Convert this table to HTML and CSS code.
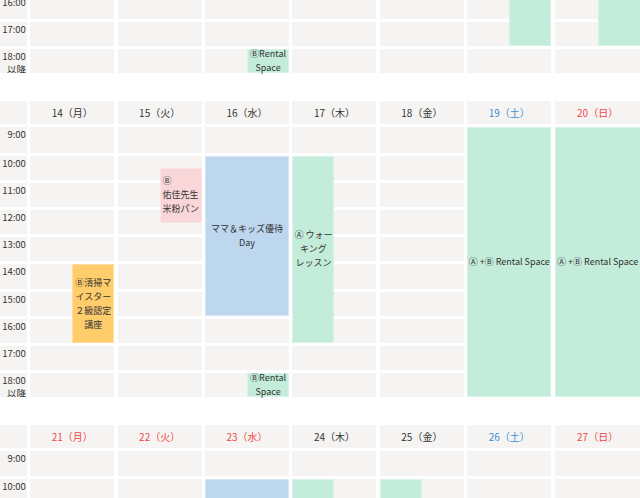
FILE: index.html
```html
<!DOCTYPE html>
<html lang="ja">
<head>
<meta charset="utf-8">
<title>スケジュール</title>
<link rel="stylesheet" href="styles.css">
</head>
<body>
<main class="calendar">

  <section class="week week-first">
    <div class="layer grid-bg">
      <div class="corner"></div>
      <div class="dh">7（月）</div><div class="dh">8（火）</div><div class="dh">9（水）</div><div class="dh">10（木）</div><div class="dh">11（金）</div><div class="dh sat">12（土）</div><div class="dh sun">13（日）</div>
      <div class="tm">9:00</div><div class="cell"></div><div class="cell"></div><div class="cell"></div><div class="cell"></div><div class="cell"></div><div class="cell"></div><div class="cell"></div>
      <div class="tm">10:00</div><div class="cell"></div><div class="cell"></div><div class="cell"></div><div class="cell"></div><div class="cell"></div><div class="cell"></div><div class="cell"></div>
      <div class="tm">11:00</div><div class="cell"></div><div class="cell"></div><div class="cell"></div><div class="cell"></div><div class="cell"></div><div class="cell"></div><div class="cell"></div>
      <div class="tm">12:00</div><div class="cell"></div><div class="cell"></div><div class="cell"></div><div class="cell"></div><div class="cell"></div><div class="cell"></div><div class="cell"></div>
      <div class="tm">13:00</div><div class="cell"></div><div class="cell"></div><div class="cell"></div><div class="cell"></div><div class="cell"></div><div class="cell"></div><div class="cell"></div>
      <div class="tm">14:00</div><div class="cell"></div><div class="cell"></div><div class="cell"></div><div class="cell"></div><div class="cell"></div><div class="cell"></div><div class="cell"></div>
      <div class="tm">15:00</div><div class="cell"></div><div class="cell"></div><div class="cell"></div><div class="cell"></div><div class="cell"></div><div class="cell"></div><div class="cell"></div>
      <div class="tm">16:00</div><div class="cell"></div><div class="cell"></div><div class="cell"></div><div class="cell"></div><div class="cell"></div><div class="cell"></div><div class="cell"></div>
      <div class="tm">17:00</div><div class="cell"></div><div class="cell"></div><div class="cell"></div><div class="cell"></div><div class="cell"></div><div class="cell"></div><div class="cell"></div>
      <div class="tm">18:00<br>以降</div><div class="cell"></div><div class="cell"></div><div class="cell"></div><div class="cell"></div><div class="cell"></div><div class="cell"></div><div class="cell"></div>
    </div>
    <div class="layer grid-ev">
      <div class="ev green d3 t18 h1 half-r"><span>ⒷRental<br>Space</span></div>
      <div class="ev green d6 t13 h5 half-r"><span>Ⓑ Rental<br>Space</span></div>
      <div class="ev green d7 t13 h5 half-r"><span>Ⓑ Rental<br>Space</span></div>
    </div>
  </section>

  <section class="week">
    <div class="layer grid-bg">
      <div class="corner"></div>
      <div class="dh">14（月）</div><div class="dh">15（火）</div><div class="dh">16（水）</div><div class="dh">17（木）</div><div class="dh">18（金）</div><div class="dh sat">19（土）</div><div class="dh sun">20（日）</div>
      <div class="tm">9:00</div><div class="cell"></div><div class="cell"></div><div class="cell"></div><div class="cell"></div><div class="cell"></div><div class="cell"></div><div class="cell"></div>
      <div class="tm">10:00</div><div class="cell"></div><div class="cell"></div><div class="cell"></div><div class="cell"></div><div class="cell"></div><div class="cell"></div><div class="cell"></div>
      <div class="tm">11:00</div><div class="cell"></div><div class="cell"></div><div class="cell"></div><div class="cell"></div><div class="cell"></div><div class="cell"></div><div class="cell"></div>
      <div class="tm">12:00</div><div class="cell"></div><div class="cell"></div><div class="cell"></div><div class="cell"></div><div class="cell"></div><div class="cell"></div><div class="cell"></div>
      <div class="tm">13:00</div><div class="cell"></div><div class="cell"></div><div class="cell"></div><div class="cell"></div><div class="cell"></div><div class="cell"></div><div class="cell"></div>
      <div class="tm">14:00</div><div class="cell"></div><div class="cell"></div><div class="cell"></div><div class="cell"></div><div class="cell"></div><div class="cell"></div><div class="cell"></div>
      <div class="tm">15:00</div><div class="cell"></div><div class="cell"></div><div class="cell"></div><div class="cell"></div><div class="cell"></div><div class="cell"></div><div class="cell"></div>
      <div class="tm">16:00</div><div class="cell"></div><div class="cell"></div><div class="cell"></div><div class="cell"></div><div class="cell"></div><div class="cell"></div><div class="cell"></div>
      <div class="tm">17:00</div><div class="cell"></div><div class="cell"></div><div class="cell"></div><div class="cell"></div><div class="cell"></div><div class="cell"></div><div class="cell"></div>
      <div class="tm">18:00<br>以降</div><div class="cell"></div><div class="cell"></div><div class="cell"></div><div class="cell"></div><div class="cell"></div><div class="cell"></div><div class="cell"></div>
    </div>
    <div class="layer grid-ev">
      <div class="ev orange d1 t14 h3 half-r"><span>Ⓑ清掃マ<br>イスター<br>２級認定<br>講座</span></div>
      <div class="ev pink d2 t10 h3 half-r half-hour left"><span>Ⓑ<br>佑佳先生<br>米粉パン</span></div>
      <div class="ev blue d3 t10 h6"><span>ママ＆キッズ優待<br>Day</span></div>
      <div class="ev green d3 t18 h1 half-r"><span>ⒷRental<br>Space</span></div>
      <div class="ev green d4 t10 h7 half-l"><span>Ⓐ ウォー<br>キング<br>レッスン</span></div>
      <div class="ev green d6 t9 h10"><span>Ⓐ +Ⓑ Rental Space</span></div>
      <div class="ev green d7 t9 h10"><span>Ⓐ +Ⓑ Rental Space</span></div>
    </div>
  </section>

  <section class="week">
    <div class="layer grid-bg">
      <div class="corner"></div>
      <div class="dh sun">21（月）</div><div class="dh sun">22（火）</div><div class="dh sun">23（水）</div><div class="dh">24（木）</div><div class="dh">25（金）</div><div class="dh sat">26（土）</div><div class="dh sun">27（日）</div>
      <div class="tm">9:00</div><div class="cell"></div><div class="cell"></div><div class="cell"></div><div class="cell"></div><div class="cell"></div><div class="cell"></div><div class="cell"></div>
      <div class="tm">10:00</div><div class="cell"></div><div class="cell"></div><div class="cell"></div><div class="cell"></div><div class="cell"></div><div class="cell"></div><div class="cell"></div>
      <div class="tm">11:00</div><div class="cell"></div><div class="cell"></div><div class="cell"></div><div class="cell"></div><div class="cell"></div><div class="cell"></div><div class="cell"></div>
      <div class="tm">12:00</div><div class="cell"></div><div class="cell"></div><div class="cell"></div><div class="cell"></div><div class="cell"></div><div class="cell"></div><div class="cell"></div>
      <div class="tm">13:00</div><div class="cell"></div><div class="cell"></div><div class="cell"></div><div class="cell"></div><div class="cell"></div><div class="cell"></div><div class="cell"></div>
      <div class="tm">14:00</div><div class="cell"></div><div class="cell"></div><div class="cell"></div><div class="cell"></div><div class="cell"></div><div class="cell"></div><div class="cell"></div>
      <div class="tm">15:00</div><div class="cell"></div><div class="cell"></div><div class="cell"></div><div class="cell"></div><div class="cell"></div><div class="cell"></div><div class="cell"></div>
      <div class="tm">16:00</div><div class="cell"></div><div class="cell"></div><div class="cell"></div><div class="cell"></div><div class="cell"></div><div class="cell"></div><div class="cell"></div>
      <div class="tm">17:00</div><div class="cell"></div><div class="cell"></div><div class="cell"></div><div class="cell"></div><div class="cell"></div><div class="cell"></div><div class="cell"></div>
      <div class="tm">18:00<br>以降</div><div class="cell"></div><div class="cell"></div><div class="cell"></div><div class="cell"></div><div class="cell"></div><div class="cell"></div><div class="cell"></div>
    </div>
    <div class="layer grid-ev">
      <div class="ev blue d3 t10 h6"><span>ママ＆キッズ優待<br>Day</span></div>
      <div class="ev green d4 t10 h7 half-l"><span>Ⓐ ウォー<br>キング<br>レッスン</span></div>
      <div class="ev green d5 t10 h3 half-l"><span>Ⓐ ウォー<br>キング<br>レッスン</span></div>
    </div>
  </section>

</main>
</body>
</html>
```

FILE: styles.css
```css
html, body {
  margin: 0;
  padding: 0;
  overflow: hidden;
  background: #ffffff;
}

body {
  font-family: "Noto Sans CJK JP", "Noto Sans", sans-serif;
  color: #333333;
}

.calendar {
  display: flex;
  flex-direction: column;
  gap: 27.5px;
}

.week {
  display: grid;
}

.week-first {
  margin-top: -223px;
}

.layer {
  grid-area: 1 / 1;
  display: grid;
  grid-template-columns: 26.9px repeat(6, 84px) 86px;
  grid-template-rows: 23.5px 25.2px repeat(9, 24.2px);
  column-gap: 3.4px;
  row-gap: 3px;
}

.corner,
.dh,
.tm,
.cell {
  background: #f5f4f2;
}

.dh {
  font-size: 10px;
  line-height: 23.5px;
  text-align: center;
  white-space: nowrap;
  color: #333333;
}

.dh.sat { color: #3b8dd6; }
.dh.sun { color: #f24848; }

.tm {
  font-size: 9.5px;
  line-height: 13px;
  text-align: right;
  padding: 1px 1px 0 0;
  overflow: hidden;
  white-space: nowrap;
}

/* events */
.ev {
  display: flex;
  align-items: center;
  justify-content: center;
  text-align: center;
  font-size: 9px;
  line-height: 14px;
  color: #333333;
  box-shadow: inset 0 0 0 1px rgba(255, 255, 255, 0.35);
  overflow: visible;
  min-width: 0;
  white-space: nowrap;
}

.ev span { display: block; }
.ev.left { text-align: left; }

.green  { background: #c3ecda; }
.blue   { background: #bdd7ee; }
.pink   { background: #f9d6d7; }
.orange { background: #ffcd6c; }

.half-r { justify-self: end; width: 50%; }
.half-l { justify-self: start; width: 50%; }
.half-hour { align-self: start; margin-top: 12.3px; height: 55px; }

/* day columns */
.d1 { grid-column: 2; }
.d2 { grid-column: 3; }
.d3 { grid-column: 4; }
.d4 { grid-column: 5; }
.d5 { grid-column: 6; }
.d6 { grid-column: 7; }
.d7 { grid-column: 8; }

/* start hours */
.t9  { grid-row-start: 2; }
.t10 { grid-row-start: 3; }
.t11 { grid-row-start: 4; }
.t12 { grid-row-start: 5; }
.t13 { grid-row-start: 6; }
.t14 { grid-row-start: 7; }
.t15 { grid-row-start: 8; }
.t16 { grid-row-start: 9; }
.t17 { grid-row-start: 10; }
.t18 { grid-row-start: 11; }

/* durations */
.h1  { grid-row-end: span 1; }
.h3  { grid-row-end: span 3; }
.h5  { grid-row-end: span 5; }
.h6  { grid-row-end: span 6; }
.h7  { grid-row-end: span 7; }
.h10 { grid-row-end: span 10; }
```
